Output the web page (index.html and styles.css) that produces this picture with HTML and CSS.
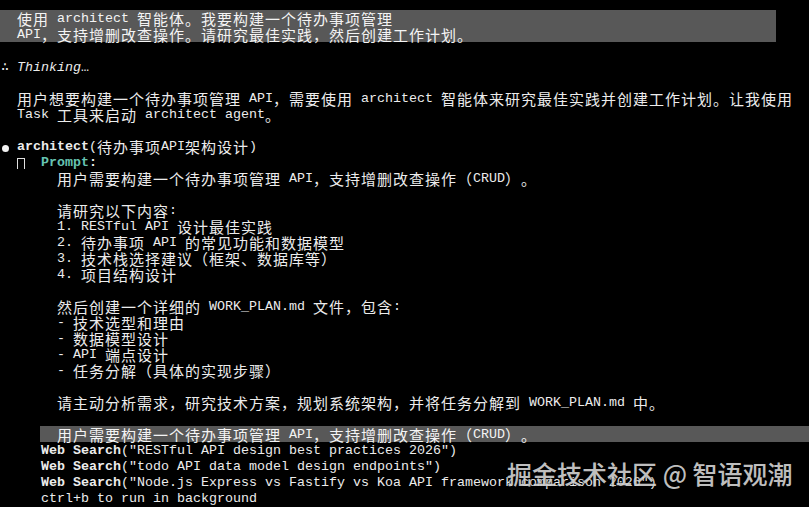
FILE: index.html
```html
<!DOCTYPE html>
<html lang="zh-CN">
<head>
<meta charset="utf-8">
<title>architect</title>
<link rel="stylesheet" href="styles.css">
</head>
<body>
<main class="term">
  <section class="bar-prompt">
    <div class="row">  <span class="c">使用</span> architect <span class="c">智能体。我要构建一个待办事项管理</span></div>
    <div class="row">  API<span class="c">，支持增删改查操作。请研究最佳实践，然后创建工作计划。</span></div>
  </section>
  <div class="row"></div>
  <div class="row"><span class="glyph">∴</span> <em class="thinking">Thinking</em>…</div>
  <div class="row"></div>
  <div class="row">  <span class="c">用户想要构建一个待办事项管理</span> API<span class="c">，需要使用</span> architect <span class="c">智能体来研究最佳实践并创建工作计划。让我使用</span></div>
  <div class="row">  Task <span class="c">工具来启动</span> architect agent<span class="c">。</span></div>
  <div class="row"></div>
  <div class="row"><span class="dot"></span><b>architect</b>(<span class="c">待办事项</span>API<span class="c">架构设计</span>)</div>
  <div class="row">  <span class="elbow"></span>  <b class="prompt">Prompt</b><b>:</b></div>
  <div class="row">       <span class="c">用户需要构建一个待办事项管理</span> API<span class="c">，支持增删改查操作（</span>CRUD<span class="c">）。</span></div>
  <div class="row"></div>
  <div class="row">       <span class="c">请研究以下内容</span>:</div>
  <div class="row">       1. RESTful API <span class="c">设计最佳实践</span></div>
  <div class="row">       2. <span class="c">待办事项</span> API <span class="c">的常见功能和数据模型</span></div>
  <div class="row">       3. <span class="c">技术栈选择建议（框架、数据库等）</span></div>
  <div class="row">       4. <span class="c">项目结构设计</span></div>
  <div class="row"></div>
  <div class="row">       <span class="c">然后创建一个详细的</span> WORK_PLAN.md <span class="c">文件，包含</span>:</div>
  <div class="row">       - <span class="c">技术选型和理由</span></div>
  <div class="row">       - <span class="c">数据模型设计</span></div>
  <div class="row">       - API <span class="c">端点设计</span></div>
  <div class="row">       - <span class="c">任务分解（具体的实现步骤）</span></div>
  <div class="row"></div>
  <div class="row">       <span class="c">请主动分析需求，研究技术方案，规划系统架构，并将任务分解到</span> WORK_PLAN.md <span class="c">中。</span></div>
  <div class="row"></div>
  <div class="row bar-echo">  <span class="c">用户需要构建一个待办事项管理</span> API<span class="c">，支持增删改查操作（</span>CRUD<span class="c">）。</span></div>
  <div class="row">     <b>Web Search</b>("RESTful API design best practices 2026")</div>
  <div class="row">     <b>Web Search</b>("todo API data model design endpoints")</div>
  <div class="row">     <b>Web Search</b>("Node.js Express vs Fastify vs Koa API framework comparison 2026")</div>
  <div class="row">     ctrl+b to run in background</div>
</main>
<div class="watermark"><span class="wm-logo"></span>掘金技术社区 @ 智语观潮</div>
</body>
</html>
```
FILE: styles.css
```css
html, body {
  margin: 0;
  padding: 0;
  background: #000;
}

body {
  width: 809px;
  height: 507px;
  overflow: hidden;
  position: relative;
  color: #ececec;
  font-family: "Liberation Mono", "DejaVu Sans Mono", "Noto Sans CJK SC", monospace;
  font-size: 13.333px;
  text-spacing-trim: space-all;
}

.term {
  padding-top: 10px;
}

.row {
  height: 16px;
  line-height: 18px;
  white-space: pre;
  padding-left: 1px;
}

.bar-prompt {
  width: 776px;
  background: #585858;
  color: #f4f4f4;
}

.bar-echo {
  margin-left: 40px;
  padding-left: 1px;
  background: #585858;
  color: #f4f4f4;
}

.c {
  font-family: "Noto Sans CJK SC", sans-serif;
  font-size: 15px;
  letter-spacing: 1px;
  line-height: 0;
  vertical-align: -2.5px;
}

.thinking {
  font-style: italic;
}

.glyph {
  font-family: "DejaVu Sans Mono", monospace;
}

b {
  font-weight: bold;
}

.prompt {
  color: #66c3b1;
}

.dot {
  display: inline-block;
  width: 7px;
  height: 7px;
  margin-left: 1px;
  margin-right: 8px;
  border-radius: 50%;
  background: #f2f2f2;
  vertical-align: -1.5px;
}

.elbow {
  display: inline-block;
  box-sizing: border-box;
  width: 8px;
  height: 11px;
  border: 1px solid #e0e0e0;
  border-bottom: none;
  vertical-align: -2.5px;
}

.watermark {
  position: absolute;
  left: 507px;
  top: 461px;
  font-family: "Noto Sans CJK SC", sans-serif;
  font-size: 25px;
  line-height: 25px;
  font-weight: 500;
  color: rgba(226, 226, 226, 0.86);
  white-space: nowrap;
  text-shadow: 0 0 2px rgba(0, 0, 0, 0.6);
}

.wm-logo {
  position: absolute;
  left: 64px;
  top: 3px;
  width: 18px;
  height: 16px;
  border-radius: 50%;
  background: rgba(130, 130, 130, 0.45);
  z-index: -1;
}
```
